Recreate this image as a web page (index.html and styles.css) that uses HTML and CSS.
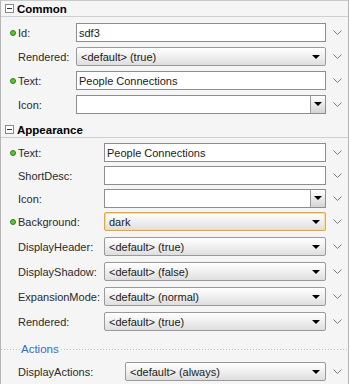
FILE: index.html
```html
<!DOCTYPE html>
<html lang="en">
<head>
    <meta charset="UTF-8">
    <title>Property Inspector</title>
    <link rel="stylesheet" href="styles.css">
</head>
<body>

<div class="panel">
    <div class="section-head"><span class="toggle"></span>Common</div>
    <div class="rows common">
        <div class="row">
            <span class="lead"><span class="dot"></span></span>
            <span class="label">Id:</span>
            <div class="field">sdf3</div>
            <span class="more"><svg width="9" height="5"><polyline points="0.5,0.5 4.5,4.5 8.5,0.5" /></svg></span>
        </div>
        <div class="row">
            <span class="lead"></span>
            <span class="label">Rendered:</span>
            <div class="field select">&lt;default&gt; (true)<span class="arrow"></span></div>
            <span class="more"><svg width="9" height="5"><polyline points="0.5,0.5 4.5,4.5 8.5,0.5" /></svg></span>
        </div>
        <div class="row">
            <span class="lead"><span class="dot"></span></span>
            <span class="label">Text:</span>
            <div class="field">People Connections</div>
            <span class="more"><svg width="9" height="5"><polyline points="0.5,0.5 4.5,4.5 8.5,0.5" /></svg></span>
        </div>
        <div class="row">
            <span class="lead"></span>
            <span class="label">Icon:</span>
            <div class="field combo"><span class="combo-text"></span><span class="combo-btn"><span class="arrow"></span></span></div>
            <span class="more"><svg width="9" height="5"><polyline points="0.5,0.5 4.5,4.5 8.5,0.5" /></svg></span>
        </div>
    </div>

    <div class="section-head"><span class="toggle"></span>Appearance</div>
    <div class="rows appearance">
        <div class="row">
            <span class="lead"><span class="dot"></span></span>
            <span class="label">Text:</span>
            <div class="field">People Connections</div>
            <span class="more"><svg width="9" height="5"><polyline points="0.5,0.5 4.5,4.5 8.5,0.5" /></svg></span>
        </div>
        <div class="row">
            <span class="lead"></span>
            <span class="label">ShortDesc:</span>
            <div class="field"></div>
            <span class="more"><svg width="9" height="5"><polyline points="0.5,0.5 4.5,4.5 8.5,0.5" /></svg></span>
        </div>
        <div class="row">
            <span class="lead"></span>
            <span class="label">Icon:</span>
            <div class="field combo"><span class="combo-text"></span><span class="combo-btn"><span class="arrow"></span></span></div>
            <span class="more"><svg width="9" height="5"><polyline points="0.5,0.5 4.5,4.5 8.5,0.5" /></svg></span>
        </div>
        <div class="row">
            <span class="lead"><span class="dot"></span></span>
            <span class="label">Background:</span>
            <div class="field select focused">dark<span class="arrow"></span></div>
            <span class="more"><svg width="9" height="5"><polyline points="0.5,0.5 4.5,4.5 8.5,0.5" /></svg></span>
        </div>
        <div class="row wide">
            <span class="lead"></span>
            <span class="label">DisplayHeader:</span>
            <div class="field select">&lt;default&gt; (true)<span class="arrow"></span></div>
            <span class="more"><svg width="9" height="5"><polyline points="0.5,0.5 4.5,4.5 8.5,0.5" /></svg></span>
        </div>
        <div class="row wide">
            <span class="lead"></span>
            <span class="label">DisplayShadow:</span>
            <div class="field select">&lt;default&gt; (false)<span class="arrow"></span></div>
            <span class="more"><svg width="9" height="5"><polyline points="0.5,0.5 4.5,4.5 8.5,0.5" /></svg></span>
        </div>
        <div class="row wide">
            <span class="lead"></span>
            <span class="label">ExpansionMode:</span>
            <div class="field select">&lt;default&gt; (normal)<span class="arrow"></span></div>
            <span class="more"><svg width="9" height="5"><polyline points="0.5,0.5 4.5,4.5 8.5,0.5" /></svg></span>
        </div>
        <div class="row wide">
            <span class="lead"></span>
            <span class="label">Rendered:</span>
            <div class="field select">&lt;default&gt; (true)<span class="arrow"></span></div>
            <span class="more"><svg width="9" height="5"><polyline points="0.5,0.5 4.5,4.5 8.5,0.5" /></svg></span>
        </div>

        <div class="group-head"><span class="group-title">Actions</span></div>
        <div class="row actions">
            <span class="lead"></span>
            <span class="label">DisplayActions:</span>
            <div class="field select">&lt;default&gt; (always)<span class="arrow"></span></div>
            <span class="more"><svg width="9" height="5"><polyline points="0.5,0.5 4.5,4.5 8.5,0.5" /></svg></span>
        </div>
    </div>
</div>

</body>
</html>
```

FILE: styles.css
```css
body {
    margin: 0;
    padding: 0;
    background: #ffffff;
    font-family: "Liberation Sans", Arial, sans-serif;
    font-size: 11px;
    color: #1a1a1a;
}

.panel {
    width: 347px;
    height: 384px;
    background: #f5f5f5;
    border-top: 1px solid #c9c9c9;
    border-left: 1px solid #b5b5b5;
    border-right: 1px solid #b5b5b5;
    box-sizing: content-box;
    overflow: hidden;
}

.section-head {
    height: 15px;
    display: flex;
    align-items: center;
    padding-left: 4px;
    font-size: 11.5px;
    font-weight: bold;
    color: #000;
    border-bottom: 1px solid #cfcfcf;
}

.toggle {
    width: 7px;
    height: 7px;
    border: 1px solid #8a8a8a;
    background: #fff;
    margin-right: 3px;
    position: relative;
}

.toggle::after {
    content: "";
    position: absolute;
    left: 1px;
    top: 3px;
    width: 5px;
    height: 1px;
    background: #333;
}

.rows {
    display: flex;
    flex-direction: column;
}

.common {
    padding: 6px 0 8px;
    gap: 5px;
}

.appearance {
    padding: 5px 0 0;
    gap: 4px;
}

.row {
    display: flex;
    align-items: center;
    height: 19px;
}

.row.wide {
    margin-top: 2px;
}

.lead {
    width: 17px;
    flex: none;
    display: flex;
    align-items: center;
}

.dot {
    width: 4px;
    height: 4px;
    margin-left: 9px;
    border-radius: 50%;
    background: #5cc639;
    border: 1px solid #2f7d1b;
}

.label {
    flex: none;
    color: #2a2a2a;
}

.common .label {
    width: 58px;
}

.appearance .label {
    width: 86px;
}

.appearance .actions .label {
    width: 107px;
}

.field {
    flex: 1;
    height: 19px;
    box-sizing: border-box;
    border: 1px solid #8d8d8d;
    background: #fff;
    display: flex;
    align-items: center;
    padding-left: 2px;
    white-space: nowrap;
    position: relative;
}

.field.select {
    padding-left: 4px;
    border-color: #9a9a9a;
    border-radius: 2px;
    background: linear-gradient(#ffffff, #f1f1f1 45%, #dedede);
}

.field.focused {
    border-color: #e4a83c;
    box-shadow: inset 0 0 0 1px #f9dc9c;
}

.arrow {
    position: absolute;
    right: 5px;
    top: 7px;
    width: 0;
    height: 0;
    border-left: 4px solid transparent;
    border-right: 4px solid transparent;
    border-top: 4px solid #000;
}

.field.combo {
    padding: 0;
}

.combo-text {
    flex: 1;
}

.combo-btn {
    width: 14px;
    height: 17px;
    border-left: 1px solid #9a9a9a;
    background: linear-gradient(#ffffff, #e9e9e9 50%, #d4d4d4);
    position: relative;
}

.combo-btn .arrow {
    right: 3px;
    top: 6px;
}

.more {
    width: 21px;
    flex: none;
    display: flex;
    justify-content: center;
    padding-left: 1px;
}

.more svg {
    display: block;
}

.more polyline {
    fill: none;
    stroke: #7a7a7a;
    stroke-width: 1;
}

.group-head {
    height: 14px;
    margin-top: 7px;
    display: flex;
    align-items: center;
    padding-left: 19px;
    background-image: linear-gradient(90deg, #c6c6c6 50%, transparent 50%);
    background-size: 3px 1px;
    background-repeat: repeat-x;
    background-position: 0 7px;
}

.group-title {
    color: #2f6fc7;
    background: #f5f5f5;
    padding: 0 2px 0 1px;
    font-size: 11.5px;
}

.actions {
    margin-top: 2px;
}
```
